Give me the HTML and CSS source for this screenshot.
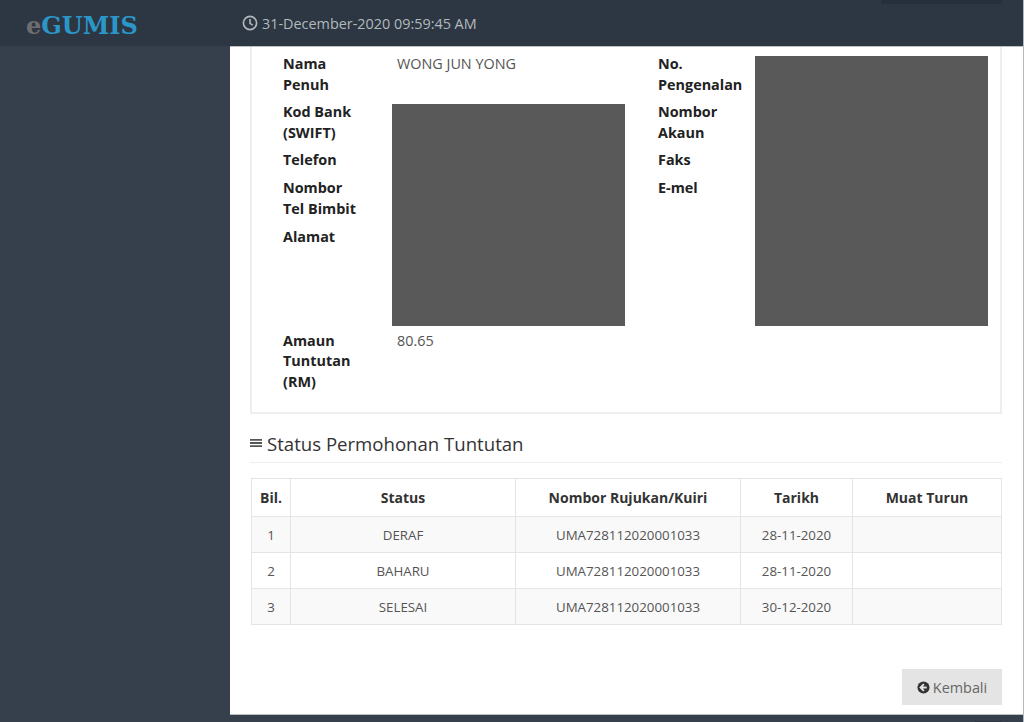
FILE: index.html
```html
<!DOCTYPE html>
<html lang="en">
<head>
    <meta charset="UTF-8">
    <title>eGUMIS</title>
    <link rel="stylesheet" href="styles.css">
</head>
<body>
    <div class="page">
        <div class="topbar">
            <div class="logo"><span class="logo-e">e</span>GUMIS</div>
            <div class="clock">
                <svg class="clock-icon" viewBox="0 0 16 16"><circle cx="8" cy="8" r="6.6"/><path d="M8 4v4.4l2.8 1.7"/></svg>
                31-December-2020 09:59:45 AM
            </div>
            <div class="user-tab"></div>
        </div>

        <div class="main">
            <div class="sidebar"></div>
            <div class="content">
                <div class="panel">
                    <div class="info">
                        <div class="lbl r1 c1">Nama Penuh</div>
                        <div class="val r1 c2">WONG JUN YONG</div>
                        <div class="lbl r1 c3">No. Pengenalan</div>

                        <div class="lbl r2 c1">Kod Bank (SWIFT)</div>
                        <div class="lbl r2 c3">Nombor Akaun</div>

                        <div class="lbl r3 c1">Telefon</div>
                        <div class="lbl r3 c3">Faks</div>

                        <div class="lbl r4 c1">Nombor Tel Bimbit</div>
                        <div class="lbl r4 c3">E-mel</div>

                        <div class="lbl r5 c1">Alamat</div>

                        <div class="lbl r6 c1">Amaun Tuntutan (RM)</div>
                        <div class="val r6 c2">80.65</div>

                        <div class="hide hide-left"></div>
                        <div class="hide hide-right"></div>
                    </div>
                </div>

                <div class="section-title">
                    <svg class="bars" viewBox="0 0 12 10"><path d="M0 1h12v1.8H0zM0 4.1h12v1.8H0zM0 7.2h12V9H0z"/></svg>
                    Status Permohonan Tuntutan
                </div>

                <table class="status">
                    <thead>
                        <tr>
                            <th class="col-bil">Bil.</th>
                            <th class="col-status">Status</th>
                            <th class="col-ruj">Nombor Rujukan/Kuiri</th>
                            <th class="col-tarikh">Tarikh</th>
                            <th>Muat Turun</th>
                        </tr>
                    </thead>
                    <tbody>
                        <tr class="odd"><td>1</td><td>DERAF</td><td>UMA728112020001033</td><td>28-11-2020</td><td></td></tr>
                        <tr><td>2</td><td>BAHARU</td><td>UMA728112020001033</td><td>28-11-2020</td><td></td></tr>
                        <tr class="odd"><td>3</td><td>SELESAI</td><td>UMA728112020001033</td><td>30-12-2020</td><td></td></tr>
                    </tbody>
                </table>

                <div class="actions">
                    <div class="btn-back">
                        <svg class="back-icon" viewBox="0 0 14 14"><circle cx="7" cy="7" r="6.5"/><path class="arrow" d="M7.4 3.4L3.8 7l3.6 3.6M4.2 7h6.2"/></svg>
                        Kembali
                    </div>
                </div>
            </div>
        </div>
        <div class="footer"><div class="footer-tab"></div></div>
    </div>
</body>
</html>
```

FILE: styles.css
```css
html, body{
    margin: 0;
    height: 100%;
    overflow: hidden;
}
body{
    font-family: "Open Sans", "Liberation Sans", sans-serif;
    font-size: 14.4px;
    color: #555;
}
.page{
    display: flex;
    flex-direction: column;
    height: 722px;
    background: #36404d;
    border-right: 1px solid #b4b9be;
}

/* top bar */
.topbar{
    display: flex;
    height: 46px;
    background: #2c3743;
}
.logo{
    width: 242px;
    padding: 10px 0 0 26px;
    box-sizing: border-box;
    font-family: "DejaVu Serif", serif;
    font-size: 24px;
    font-weight: bold;
    line-height: 32px;
    color: #2b96c8;
}
.logo-e{
    color: #6e6e6e;
}
.clock{
    display: flex;
    align-items: center;
    gap: 4px;
    height: 46px;
    width: 639px;
    color: #b3b8bd;
    white-space: nowrap;
}
.clock-icon{
    width: 16px;
    height: 16px;
    fill: none;
    stroke: #b3b8bd;
    stroke-width: 1.6;
}
.user-tab{
    width: 121px;
    height: 4px;
    background: #272f3c;
}

/* main */
.main{
    display: flex;
    height: 669px;
}
.sidebar{
    width: 230px;
    flex: none;
}
.content{
    flex: 1;
    background: #fff;
    border-top: 1px solid #bcc0c4;
    border-bottom: 1px solid #bcc0c4;
    box-sizing: border-box;
    padding: 0 21px 0 20px;
}
.panel{
    border: 2px solid #eee;
    border-top: 0;
    height: 367px;
    box-sizing: border-box;
    padding: 7px 0 0 31px;
}
.info{
    display: grid;
    grid-template-columns: 109px 233px 33px 97px 233px;
    grid-template-rows: 48px 48px 28px 48.5px 104px auto;
    line-height: 20.5px;
}
.lbl{
    font-weight: bold;
    color: #222;
}
.lbl.c1{
    padding-right: 30px;
}
.val{
    padding-left: 5px;
}
.c1{ grid-column: 1; }
.c2{ grid-column: 2; }
.c3{ grid-column: 4; }
.r1{ grid-row: 1; }
.r2{ grid-row: 2; }
.r3{ grid-row: 3; }
.r4{ grid-row: 4; }
.r5{ grid-row: 5; }
.r6{ grid-row: 6; }
.hide{
    background: #595959;
    margin-bottom: 5px;
}
.hide-left{
    grid-column: 2;
    grid-row: 2 / 6;
    margin-top: 2px;
}
.hide-right{
    grid-column: 5;
    grid-row: 1 / 6;
    margin-top: 2px;
}

/* status section */
.section-title{
    display: flex;
    align-items: center;
    gap: 5px;
    height: 38px;
    padding-top: 10px;
    border-bottom: 1px solid #eee;
    font-size: 18.6px;
    color: #333;
}
.bars{
    width: 12px;
    height: 10px;
    fill: #555;
}
.status{
    width: 751px;
    margin-top: 15px;
    margin-left: 1px;
    border-collapse: collapse;
    table-layout: fixed;
}
.status th, .status td{
    border: 1px solid #e4e4e4;
    text-align: center;
    padding: 0;
}
.status th{
    height: 36px;
    padding-bottom: 1px;
    font-size: 14px;
    color: #333;
}
.status td{
    height: 35px;
    font-size: 13.3px;
    color: #555;
}
.col-bil{ width: 38px; }
.col-status{ width: 224px; }
.col-ruj{ width: 224px; }
.col-tarikh{ width: 111px; }
.odd{
    background: #f9f9f9;
}
.actions{
    display: flex;
    justify-content: flex-end;
    margin-top: 44px;
}
.btn-back{
    display: flex;
    align-items: center;
    justify-content: center;
    gap: 3px;
    width: 100px;
    height: 36px;
    background: #e4e4e4;
    color: #666;
}
.back-icon{
    width: 13px;
    height: 13px;
}
.back-icon circle{
    fill: #333;
}
.back-icon .arrow{
    fill: none;
    stroke: #e4e4e4;
    stroke-width: 2;
}

/* bottom strip */
.footer{
    display: flex;
    justify-content: flex-end;
    align-items: flex-end;
    flex: 1;
    padding-right: 21px;
}
.footer-tab{
    width: 27px;
    height: 1px;
    background: #2e3743;
}
```
